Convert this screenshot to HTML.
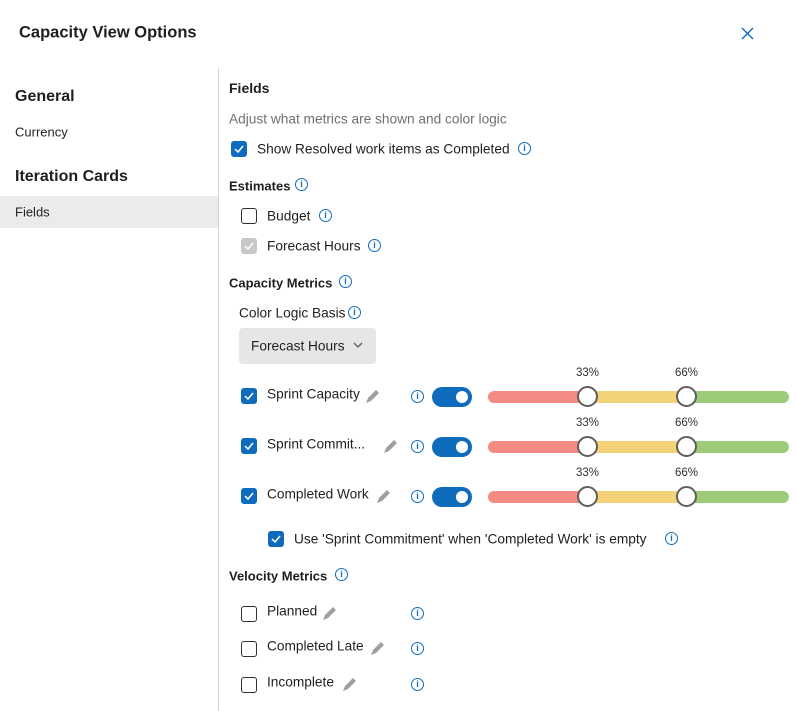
<!DOCTYPE html>
<html><head><style>
*{margin:0;padding:0;box-sizing:border-box}
body{width:796px;height:711px;background:#fff;font-family:"Segoe UI","Liberation Sans",sans-serif;color:#201f1e;position:relative;overflow:hidden;font-size:13.7px}
.a{position:absolute;white-space:nowrap}
.t{transform:translateY(-50%)}
.cb{position:absolute;width:16px;height:16px;border-radius:3px;border:1px solid #323130;background:#fff}
.cb.on{background:#0f6cbd;border-color:#0f6cbd}
.cb.dis{background:#c8c8c8;border-color:#c8c8c8}
.cb svg{position:absolute;left:2px;top:2px}
.info{position:absolute;width:13px;height:13px;border:1px solid #0f6cbd;border-radius:50%;color:#0f6cbd;font-size:9px;line-height:11px;text-align:center;font-weight:bold}
.tg{position:absolute;width:40px;height:20px;border-radius:10px;background:#0f6cbd}
.tg:after{content:"";position:absolute;right:4px;top:4px;width:12px;height:12px;border-radius:50%;background:#fff}
.tr{position:absolute;left:488px;width:301px;height:12px;border-radius:6px;background:linear-gradient(90deg,#f48b82 0 33%,#f3d27a 33% 66%,#9ccc7a 66%)}
.th{position:absolute;width:21px;height:21px;border-radius:50%;border:2px solid #605e5c;background:#fff}
.pc{position:absolute;font-size:11.5px;color:#323130}
.b{font-weight:600}
</style></head><body>
<div class="a t b" style="left:19px;top:33px;font-size:16.5px">Capacity View Options</div>
<svg class="a" style="left:741px;top:27px" width="13" height="13"><path d="M1 1L12 12M12 1L1 12" stroke="#0f6cbd" stroke-width="1.4"/></svg>
<div class="a t b" style="left:15px;top:97px;font-size:16px">General</div>
<div class="a t" style="left:15px;top:132px;font-size:13px">Currency</div>
<div class="a t b" style="left:15px;top:177px;font-size:16px">Iteration Cards</div>
<div class="a" style="left:0;top:196px;width:218px;height:32px;background:#ebebeb"></div>
<div class="a t" style="left:15px;top:212px;font-size:13px">Fields</div>
<div class="a" style="left:218px;top:68px;width:1px;height:643px;background:#d6d6d6"></div>

<div class="a t b" style="left:229px;top:88px;font-size:14px">Fields</div>
<div class="a t" style="left:229px;top:119px;color:#707070">Adjust what metrics are shown and color logic</div>
<div class="cb on" style="left:231px;top:141px"><svg width="10" height="10"><path d="M1 5l3 3 5-6" stroke="#fff" stroke-width="1.5" fill="none"/></svg></div>
<div class="a t" style="left:257px;top:149px">Show Resolved work items as Completed</div>
<div class="info" style="left:518px;top:142px">i</div>

<div class="a t b" style="left:229px;top:186px;font-size:13px">Estimates</div>
<div class="info" style="left:295px;top:178px">i</div>
<div class="cb" style="left:241px;top:208px"></div>
<div class="a t" style="left:267px;top:216px">Budget</div>
<div class="info" style="left:319px;top:209px">i</div>
<div class="cb dis" style="left:241px;top:238px"><svg width="10" height="10"><path d="M1 5l3 3 5-6" stroke="#fff" stroke-width="1.5" fill="none"/></svg></div>
<div class="a t" style="left:267px;top:246px">Forecast Hours</div>
<div class="info" style="left:368px;top:239px">i</div>

<div class="a t b" style="left:229px;top:283px;font-size:13px">Capacity Metrics</div>
<div class="info" style="left:339px;top:275px">i</div>
<div class="a t" style="left:239px;top:313px">Color Logic Basis</div>
<div class="info" style="left:348px;top:306px">i</div>
<div class="a" style="left:239px;top:328px;width:137px;height:36px;background:#e6e6e6;border-radius:4px"></div>
<div class="a t" style="left:251px;top:346px">Forecast Hours</div>
<svg class="a" style="left:353px;top:342px" width="10" height="7"><path d="M1 1l4 4 4-4" stroke="#605e5c" stroke-width="1.3" fill="none"/></svg>

<div class="cb on" style="left:241px;top:388px"><svg width="10" height="10"><path d="M1 5l3 3 5-6" stroke="#fff" stroke-width="1.5" fill="none"/></svg></div>
<div class="a t" style="left:267px;top:394px">Sprint Capacity</div>
<svg class="a" style="left:364px;top:389px" width="16" height="16"><path d="M2 14l2-5 8-8 3 3-8 8z" fill="#a19f9d"/></svg>
<div class="info" style="left:411px;top:390px">i</div>
<div class="tg" style="left:432px;top:387px"></div>
<div class="pc" style="left:576px;top:367px">33%</div><div class="pc" style="left:675px;top:367px">66%</div>
<div class="tr" style="top:391px"></div>
<div class="th" style="left:577px;top:386px"></div><div class="th" style="left:676px;top:386px"></div>

<div class="cb on" style="left:241px;top:438px"><svg width="10" height="10"><path d="M1 5l3 3 5-6" stroke="#fff" stroke-width="1.5" fill="none"/></svg></div>
<div class="a t" style="left:267px;top:444px">Sprint Commit...</div>
<svg class="a" style="left:382px;top:439px" width="16" height="16"><path d="M2 14l2-5 8-8 3 3-8 8z" fill="#a19f9d"/></svg>
<div class="info" style="left:411px;top:440px">i</div>
<div class="tg" style="left:432px;top:437px"></div>
<div class="pc" style="left:576px;top:417px">33%</div><div class="pc" style="left:675px;top:417px">66%</div>
<div class="tr" style="top:441px"></div>
<div class="th" style="left:577px;top:436px"></div><div class="th" style="left:676px;top:436px"></div>

<div class="cb on" style="left:241px;top:488px"><svg width="10" height="10"><path d="M1 5l3 3 5-6" stroke="#fff" stroke-width="1.5" fill="none"/></svg></div>
<div class="a t" style="left:267px;top:494px">Completed Work</div>
<svg class="a" style="left:375px;top:489px" width="16" height="16"><path d="M2 14l2-5 8-8 3 3-8 8z" fill="#a19f9d"/></svg>
<div class="info" style="left:411px;top:490px">i</div>
<div class="tg" style="left:432px;top:487px"></div>
<div class="pc" style="left:576px;top:467px">33%</div><div class="pc" style="left:675px;top:467px">66%</div>
<div class="tr" style="top:491px"></div>
<div class="th" style="left:577px;top:486px"></div><div class="th" style="left:676px;top:486px"></div>

<div class="cb on" style="left:268px;top:531px"><svg width="10" height="10"><path d="M1 5l3 3 5-6" stroke="#fff" stroke-width="1.5" fill="none"/></svg></div>
<div class="a t" style="left:294px;top:539px">Use 'Sprint Commitment' when 'Completed Work' is empty</div>
<div class="info" style="left:665px;top:532px">i</div>

<div class="a t b" style="left:229px;top:576px;font-size:13px">Velocity Metrics</div>
<div class="info" style="left:335px;top:568px">i</div>
<div class="cb" style="left:241px;top:606px"></div>
<div class="a t" style="left:267px;top:611px">Planned</div>
<svg class="a" style="left:321px;top:606px" width="16" height="16"><path d="M2 14l2-5 8-8 3 3-8 8z" fill="#a19f9d"/></svg>
<div class="info" style="left:411px;top:607px">i</div>
<div class="cb" style="left:241px;top:641px"></div>
<div class="a t" style="left:267px;top:646px">Completed Late</div>
<svg class="a" style="left:369px;top:641px" width="16" height="16"><path d="M2 14l2-5 8-8 3 3-8 8z" fill="#a19f9d"/></svg>
<div class="info" style="left:411px;top:642px">i</div>
<div class="cb" style="left:241px;top:677px"></div>
<div class="a t" style="left:267px;top:682px">Incomplete</div>
<svg class="a" style="left:341px;top:677px" width="16" height="16"><path d="M2 14l2-5 8-8 3 3-8 8z" fill="#a19f9d"/></svg>
<div class="info" style="left:411px;top:678px">i</div>
</body></html>
